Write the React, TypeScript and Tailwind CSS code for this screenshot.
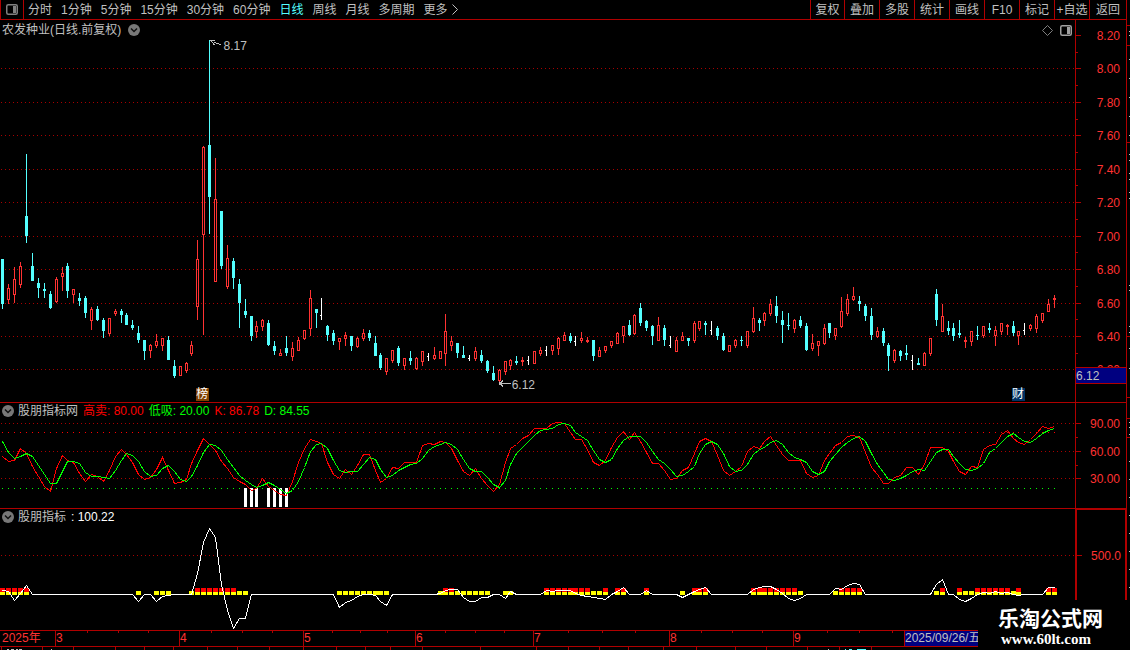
import type { ReactNode } from "react";

type Kind = "u" | "d" | "w";
type Candle = [Kind, number, number, number, number];

// kind, high, body top, body bottom, low (y inside the price panel, offset by PRICE_TOP)
const CANDLES: Candle[] = [
  ["d", 259, 259, 304, 309], ["u", 284, 288, 300, 304], ["u", 267, 279, 295, 303], ["u", 262, 266, 285, 288],
  ["d", 154, 216, 236, 243], ["d", 253, 266, 281, 281], ["d", 278, 283, 288, 298], ["d", 283, 289, 291, 298],
  ["d", 291, 294, 308, 309], ["u", 277, 279, 302, 303], ["u", 267, 273, 277, 291], ["d", 263, 266, 291, 298],
  ["u", 289, 289, 295, 303], ["d", 293, 298, 301, 306], ["d", 296, 298, 313, 318], ["u", 307, 309, 321, 330],
  ["d", 306, 309, 320, 321], ["d", 318, 320, 331, 338], ["u", 318, 318, 334, 336], ["u", 309, 311, 314, 316],
  ["d", 309, 311, 315, 323], ["d", 313, 315, 325, 325], ["d", 320, 325, 328, 330], ["d", 326, 333, 340, 343],
  ["d", 340, 340, 351, 360], ["u", 344, 345, 351, 358], ["u", 334, 341, 346, 348], ["u", 338, 338, 346, 351],
  ["d", 336, 340, 360, 360], ["d", 360, 366, 376, 378], ["u", 366, 366, 376, 376], ["u", 362, 363, 371, 373],
  ["u", 341, 345, 354, 356], ["u", 240, 259, 307, 320], ["u", 146, 147, 235, 335], ["d", 40, 145, 197, 234],
  ["u", 158, 199, 282, 282], ["d", 211, 211, 266, 269], ["u", 245, 258, 287, 289], ["d", 258, 261, 278, 289],
  ["d", 279, 284, 303, 328], ["d", 299, 311, 315, 318], ["d", 316, 316, 336, 341], ["u", 321, 326, 332, 338],
  ["u", 319, 320, 327, 331], ["d", 320, 323, 345, 346], ["d", 341, 346, 351, 355], ["u", 349, 353, 356, 356],
  ["d", 336, 348, 353, 356], ["u", 342, 348, 357, 361], ["u", 337, 340, 351, 351], ["u", 330, 330, 339, 340],
  ["u", 290, 298, 329, 336], ["d", 309, 309, 313, 328], ["w", 298, 315, 316, 320], ["d", 325, 326, 335, 341],
  ["d", 330, 333, 341, 345], ["u", 338, 338, 342, 350], ["u", 332, 335, 339, 346], ["d", 336, 336, 346, 351],
  ["u", 337, 338, 347, 348], ["u", 329, 333, 339, 341], ["d", 330, 333, 338, 341], ["d", 336, 343, 356, 356],
  ["d", 353, 355, 368, 370], ["u", 358, 358, 372, 375], ["u", 350, 350, 361, 363], ["d", 346, 348, 363, 366],
  ["u", 358, 358, 366, 370], ["d", 351, 358, 361, 365], ["u", 357, 358, 369, 370], ["u", 351, 351, 362, 366],
  ["w", 353, 356, 357, 361], ["u", 347, 355, 359, 360], ["u", 351, 351, 359, 359], ["u", 314, 331, 354, 366],
  ["u", 336, 341, 346, 351], ["d", 343, 343, 353, 358], ["d", 346, 355, 358, 358], ["w", 355, 358, 359, 361],
  ["u", 347, 351, 359, 361], ["d", 350, 355, 361, 363], ["d", 360, 361, 371, 373], ["d", 366, 373, 380, 381],
  ["u", 369, 370, 381, 382], ["u", 361, 361, 372, 375], ["u", 359, 360, 366, 370], ["d", 356, 361, 363, 365],
  ["u", 357, 360, 362, 366], ["w", 356, 360, 361, 365], ["u", 351, 351, 364, 364], ["u", 347, 350, 354, 356],
  ["w", 346, 350, 351, 356], ["u", 345, 345, 351, 355], ["u", 337, 338, 349, 355], ["u", 332, 335, 341, 341],
  ["d", 333, 336, 341, 343], ["w", 336, 341, 342, 346], ["u", 332, 338, 341, 343], ["u", 337, 340, 342, 343],
  ["d", 340, 340, 356, 361], ["u", 347, 350, 357, 357], ["u", 346, 346, 351, 353], ["u", 341, 341, 346, 348],
  ["u", 332, 333, 344, 344], ["u", 326, 326, 336, 343], ["d", 320, 325, 335, 336], ["u", 314, 315, 334, 335],
  ["d", 303, 308, 323, 326], ["d", 320, 321, 328, 331], ["d", 325, 326, 336, 345], ["u", 317, 325, 341, 341],
  ["d", 325, 328, 340, 346], ["w", 336, 345, 346, 348], ["u", 337, 340, 352, 352], ["u", 332, 336, 341, 341],
  ["d", 338, 338, 341, 346], ["u", 321, 323, 341, 343], ["u", 321, 321, 329, 331], ["d", 321, 323, 325, 335],
  ["w", 321, 330, 331, 335], ["d", 326, 328, 336, 340], ["d", 333, 336, 350, 351], ["u", 345, 345, 352, 352],
  ["u", 339, 340, 346, 348], ["d", 336, 340, 341, 346], ["u", 331, 331, 346, 348], ["u", 307, 318, 332, 333],
  ["d", 318, 320, 323, 331], ["u", 312, 313, 321, 326], ["u", 299, 304, 314, 316], ["d", 296, 306, 316, 323],
  ["d", 311, 320, 325, 343], ["d", 313, 325, 326, 330], ["u", 319, 320, 329, 333], ["d", 316, 320, 326, 328],
  ["d", 323, 326, 350, 351], ["u", 334, 343, 349, 351], ["u", 341, 341, 346, 356], ["u", 324, 328, 344, 345],
  ["d", 323, 323, 333, 338], ["u", 328, 328, 336, 340], ["u", 297, 311, 327, 328], ["u", 294, 299, 314, 316],
  ["u", 287, 296, 300, 301], ["d", 296, 301, 304, 311], ["d", 304, 306, 316, 321], ["d", 308, 316, 335, 340],
  ["u", 327, 331, 337, 338], ["d", 328, 331, 343, 346], ["d", 343, 345, 356, 371], ["u", 349, 350, 361, 363],
  ["d", 350, 351, 356, 361], ["d", 345, 353, 355, 360], ["w", 355, 360, 361, 370], ["d", 358, 363, 365, 365],
  ["u", 352, 353, 366, 366], ["u", 338, 338, 354, 356], ["d", 289, 294, 320, 326], ["u", 304, 316, 332, 332],
  ["d", 321, 328, 331, 335], ["d", 323, 328, 336, 341], ["d", 320, 333, 335, 338], ["u", 337, 340, 342, 348],
  ["u", 331, 331, 342, 346], ["d", 326, 335, 336, 340], ["u", 326, 326, 336, 338], ["d", 323, 328, 330, 333],
  ["u", 326, 330, 336, 346], ["u", 323, 323, 332, 335], ["u", 324, 325, 327, 335], ["d", 321, 326, 333, 336],
  ["u", 331, 331, 336, 345], ["w", 323, 330, 331, 335], ["u", 324, 325, 329, 331], ["u", 314, 316, 329, 333],
  ["u", 313, 313, 321, 323], ["u", 299, 304, 312, 312], ["u", 295, 298, 300, 308],
];

// Line values are kept in thirds of a unit
const K_LINE = [
  168, 183, 181, 145, 159, 198, 230, 258, 273, 205, 167, 181, 186, 221, 243, 224, 230, 243, 210, 170,
  149, 163, 186, 223, 238, 233, 207, 173, 212, 249, 246, 238, 190, 152, 115, 132, 151, 184, 204, 233,
  243, 252, 270, 264, 235, 258, 270, 283, 286, 244, 187, 144, 118, 123, 130, 187, 222, 235, 209, 222,
  196, 163, 163, 212, 246, 235, 202, 205, 187, 187, 187, 136, 130, 132, 124, 127, 145, 181, 213, 226,
  205, 235, 256, 274, 254, 188, 145, 133, 115, 105, 85, 85, 85, 70, 66, 69, 97, 118, 118, 147,
  186, 195, 182, 142, 112, 95, 117, 98, 124, 157, 190, 190, 210, 238, 235, 212, 202, 160, 123, 114,
  123, 166, 212, 225, 215, 200, 153, 140, 146, 123, 110, 135, 163, 180, 180, 180, 220, 233, 225, 180,
  160, 135, 127, 109, 106, 112, 156, 203, 224, 250, 250, 231, 225, 202, 202, 223, 193, 143, 142, 142,
  155, 185, 213, 222, 198, 203, 148, 135, 132, 102, 90, 114, 127, 133, 118, 100, 79, 85, 79,
];

const D_LINE = [
  123, 157, 175, 170, 159, 168, 196, 222, 250, 250, 215, 184, 184, 190, 216, 230, 230, 233, 234, 212,
  181, 160, 167, 184, 213, 229, 226, 206, 195, 215, 238, 244, 229, 196, 158, 133, 136, 152, 177, 202,
  226, 240, 253, 262, 255, 247, 255, 268, 279, 272, 243, 201, 155, 132, 130, 146, 180, 210, 217, 214,
  213, 192, 173, 178, 208, 232, 226, 211, 202, 193, 189, 176, 150, 138, 132, 127, 132, 149, 178, 205,
  213, 214, 233, 252, 262, 241, 192, 160, 141, 123, 107, 92, 88, 85, 73, 70, 77, 97, 110, 121,
  150, 177, 187, 177, 146, 121, 110, 109, 109, 127, 155, 178, 189, 209, 230, 225, 215, 198, 160, 132,
  124, 132, 160, 198, 213, 210, 192, 163, 147, 142, 127, 121, 132, 157, 172, 178, 186, 213, 222, 213,
  185, 163, 142, 127, 114, 109, 123, 160, 194, 217, 238, 241, 234, 226, 214, 208, 210, 183, 157, 149,
  149, 169, 189, 207, 211, 206, 190, 157, 144, 128, 108, 101, 111, 124, 127, 115, 101, 90, 85,
];

// Every day that is not listed sits on the zero line
const ZERO = 583;
const FLOW: Record<number, number> = {
  0: 570, 1: 573, 2: 601, 3: 581, 4: 556, 23: 605, 26: 605, 27: 588, 28: 586, 33: 520, 34: 428, 35: 385,
  36: 412, 37: 553, 38: 630, 39: 685, 40: 656, 41: 656, 57: 622, 58: 607, 59: 600, 60: 588, 63: 585,
  64: 603, 65: 616, 74: 580, 75: 571, 76: 567, 77: 569, 78: 592, 79: 604, 80: 604, 81: 593, 82: 592,
  85: 595, 86: 573, 92: 571, 93: 574, 94: 571, 95: 571, 96: 571, 97: 579, 98: 586, 99: 588, 100: 592,
  101: 595, 102: 598, 104: 573, 105: 563, 109: 571, 115: 591, 117: 574, 118: 568, 119: 563, 127: 567,
  128: 562, 129: 559, 130: 560, 131: 568, 132: 580, 133: 596, 134: 601, 135: 595, 141: 566, 142: 568,
  143: 556, 144: 549, 145: 553, 158: 553, 159: 538, 162: 598, 163: 604, 164: 594, 166: 577, 167: 580,
  168: 574, 169: 580, 170: 577, 172: 586, 177: 563, 178: 562,
};

const YELLOW = [
  [0, 4], [23, 23], [26, 28], [32, 41], [57, 65], [74, 82], [85, 86], [92, 102], [104, 105], [109, 109],
  [115, 115], [117, 119], [127, 135], [141, 145], [158, 159], [162, 172], [177, 178],
];
const RED = [
  [0, 4], [33, 39], [75, 76], [92, 99], [102, 102], [104, 105], [109, 109], [117, 119], [127, 134],
  [142, 145], [159, 159], [162, 162], [165, 170], [172, 172], [177, 178],
];
const LOW_BARS = [41, 42, 43, 45, 46, 47, 48];

const PRICE_TOP = 20;
const KD_TOP = 403;
const FLOW_TOP = 509;
const CHART_W = 1075;

const xOf = (i: number) => Math.floor(2.93 + 5.907 * i);
const days = CANDLES.map((_, i) => i);
const expand = (ranges: number[][]) => days.filter((i) => ranges.some(([a, b]) => i >= a && i <= b));
const toPoints = (values: number[], top: number) =>
  values.map((v, i) => `${xOf(i) + 0.5},${Math.floor(400 + v / 3 - top) + 0.5}`).join(" ");

const PERIODS = ["分时", "1分钟", "5分钟", "15分钟", "30分钟", "60分钟", "日线", "周线", "月线", "多周期"];
const ACTIONS = ["叠加", "多股", "统计", "画线", "F10", "标记", "+自选"];
const PRICES = ["8.20", "8.00", "7.80", "7.60", "7.40", "7.20", "7.00", "6.80", "6.60", "6.40", "6.20"];
const MONTHS = [
  { label: "3", span: 124 },
  { label: "4", span: 124 },
  { label: "5", span: 112 },
  { label: "6", span: 118 },
  { label: "7", span: 136 },
  { label: "8", span: 124 },
  { label: "9", span: 131 },
];

function SidePanelIcon({ className }: { className: string }) {
  return (
    <svg viewBox="0 0 12 11" width="12" height="11" className={className}>
      <rect x="0.75" y="0.75" width="10.5" height="9.5" rx="1.5" fill="none" stroke="currentColor" strokeWidth="1.5" />
      <rect x="7" y="2" width="3" height="7" fill="currentColor" />
    </svg>
  );
}

function FoldButton({ label }: { label: string }) {
  return (
    <button type="button" aria-label={label} className="size-3 shrink-0">
      <svg viewBox="0 0 12 12" width="12" height="12">
        <circle cx="6" cy="6" r="6" fill="#787878" />
        <path d="M3 4.5 6 7.5 9 4.5" fill="none" stroke="#101010" strokeWidth="1.5" />
      </svg>
    </button>
  );
}

function GridLine({ y }: { y: number }) {
  return <line x1="1" x2={CHART_W} y1={y + 0.5} y2={y + 0.5} stroke="#a80000" strokeDasharray="1 3" />;
}

function Chart({ height, children }: { height: number; children: ReactNode }) {
  return (
    <svg
      viewBox={`0 0 ${CHART_W} ${height}`}
      height={height}
      preserveAspectRatio="none"
      shapeRendering="crispEdges"
      className="block w-full"
    >
      {children}
    </svg>
  );
}

function Axis({ height, labels, minor }: { height: number; labels: [string, number][]; minor: number[] }) {
  return (
    <svg width="50" height={height} className="block" fill="#ff3232" fontSize="12">
      {labels.map(([text, y]) => (
        <g key={text}>
          <rect x="0" y={y} width="5" height="1" fill="#b00000" />
          <text x="44" y={y + 5} textAnchor="end">
            {text}
          </text>
        </g>
      ))}
      {minor.map((y) => (
        <rect key={y} x="0" y={y} width="2" height="1" fill="#b00000" />
      ))}
    </svg>
  );
}

function CandleShape({ candle, x }: { candle: Candle; x: number }) {
  const [kind, high, top, bottom, low] = candle;
  const y = (v: number) => v - PRICE_TOP;
  if (kind === "w") {
    return (
      <g fill="#ffffff">
        <rect x={x} y={y(high)} width="1" height={low - high} />
        <rect x={x - 1} y={y(top)} width="1" height="1" />
      </g>
    );
  }
  if (kind === "d") {
    return (
      <g fill="#54ffff">
        <rect x={x} y={y(high)} width="1" height={low - high} />
        <rect x={x - 1} y={y(top)} width="3" height={bottom - top} />
      </g>
    );
  }
  return (
    <g fill="#ff3232">
      <rect x={x} y={y(high)} width="1" height={top - high} />
      <rect x={x} y={y(bottom)} width="1" height={low - bottom} />
      <rect x={x - 0.5} y={y(top) + 0.5} width="2" height={bottom - top - 1} fill="none" stroke="#ff3232" />
    </g>
  );
}

function Toolbar() {
  return (
    <header className="flex h-5 items-stretch border-b border-[#b00000]">
      <button
        type="button"
        aria-label="侧栏"
        className="flex w-6 items-center justify-center border-x border-[#b00000] text-[#808080]"
      >
        <SidePanelIcon className="mb-px" />
      </button>
      <nav className="flex items-center gap-[9px] pl-1">
        {PERIODS.map((p) => (
          <button type="button" key={p} className={p === "日线" ? "text-[#54ffff]" : ""}>
            {p}
          </button>
        ))}
        <button type="button" className="flex items-center gap-1">
          更多
          <svg viewBox="0 0 6 11" width="6" height="11" fill="none" stroke="currentColor">
            <path d="M0.5 0.5 5.5 5.5 0.5 10.5" />
          </svg>
        </button>
      </nav>
      <div className="ml-auto flex items-stretch border-r border-[#b00000]">
        <button type="button" className="w-[34px] border-l border-[#b00000]">
          复权
        </button>
        {ACTIONS.map((a) => (
          <button type="button" key={a} className="w-[35px] border-l border-[#b00000] whitespace-nowrap">
            {a}
          </button>
        ))}
        <button type="button" className="w-[37px] border-l border-[#b00000]">
          返回
        </button>
      </div>
    </header>
  );
}

function PricePanel() {
  const gridY = (i: number) => Math.floor(15.4 + 33.45 * i);
  return (
    <section className="flex border-b border-[#b00000]">
      <div className="relative min-w-0 flex-1">
        <Chart height={382}>
          {PRICES.slice(1).map((p, i) => (
            <GridLine key={p} y={gridY(i + 1)} />
          ))}
          {CANDLES.map((c, i) => (
            <CandleShape key={i} candle={c} x={xOf(i)} />
          ))}
          <g fill="none" stroke="#c0c0c0">
            <path d="M210 20.5h5M210.5 20l4 5M214 22.5l7 2" />
            <path d="M499 363.5h12M503 360.5l-3 3 3 3" />
            <path d="M499 363h3" strokeWidth="3" />
          </g>
        </Chart>
        <div className="absolute inset-x-0 top-0 flex h-5 items-center pr-[3px] pl-0.5">
          <h1>农发种业(日线.前复权)</h1>
          <div className="ml-[7px] flex">
            <FoldButton label="主图菜单" />
          </div>
          <div className="ml-auto flex items-center gap-[7px] text-[#808080]">
            <svg viewBox="0 0 11 11" width="11" height="11" fill="none" stroke="currentColor">
              <path d="M5.5 0.5 10.5 5.5 5.5 10.5 0.5 5.5Z" />
            </svg>
            <SidePanelIcon className="text-[#a0a0a0]" />
          </div>
        </div>
        <span className="absolute top-[18px] left-[20.8%]">8.17</span>
        <span className="absolute top-[357px] left-[47.6%]">6.12</span>
        <span className="absolute top-[368px] left-[18.2%] size-[13px] bg-[#804000] text-center leading-3 text-white">
          榜
        </span>
        <span className="absolute top-[368px] left-[94.1%] size-[13px] bg-[#003264] text-center leading-3 text-white">
          财
        </span>
      </div>
      <div className="relative border-x border-[#b00000]">
        <Axis
          height={382}
          labels={PRICES.map((p, i) => [p, gridY(i)])}
          minor={PRICES.slice(1).map((_, i) => gridY(i + 0.5))}
        />
        <div className="absolute inset-x-0 top-[347px] flex h-[17px] items-center border-y border-[#b00000] bg-[#000080] text-[#c0c0c0]">
          6.12
        </div>
      </div>
    </section>
  );
}

function KdPanel() {
  return (
    <section className="flex border-b border-[#b00000]">
      <div className="relative min-w-0 flex-1">
        <Chart height={105}>
          {[20, 48, 75].map((y) => (
            <GridLine key={y} y={y} />
          ))}
          {days.map((i) => (
            <g key={i}>
              <rect x={xOf(i)} y="29" width="1" height="1" fill="#ff0000" />
              <rect x={xOf(i)} y="85" width="1" height="1" fill="#00ff00" />
            </g>
          ))}
          {LOW_BARS.map((i) => (
            <rect key={i} x={xOf(i) - 1} y="85" width="3" height="19" fill="#ffffff" />
          ))}
          <polyline points={toPoints(K_LINE, KD_TOP)} fill="none" stroke="#ff0000" />
          <polyline points={toPoints(D_LINE, KD_TOP)} fill="none" stroke="#00ff00" />
        </Chart>
        <div className="absolute inset-x-0 top-0 flex h-4 items-center gap-1 pl-0.5 whitespace-nowrap">
          <FoldButton label="副图一菜单" />
          <div className="flex gap-[5px]">
            <h2>股朋指标网</h2>
            <span className="text-[#ff0000]">高卖: 80.00</span>
            <span className="text-[#00ff00]">低吸: 20.00</span>
            <span className="text-[#ff0000]">K: 86.78</span>
            <span className="text-[#00ff00]">D: 84.55</span>
          </div>
        </div>
      </div>
      <div className="border-x border-[#b00000]">
        <Axis height={105} labels={[["90.00", 20], ["60.00", 48], ["30.00", 75]]} minor={[34, 62]} />
      </div>
    </section>
  );
}

function FlowPanel() {
  const values = days.map((i) => FLOW[i] ?? ZERO);
  return (
    <section className="flex border-b border-[#b00000]">
      <div className="relative min-w-0 flex-1">
        <Chart height={121}>
          <GridLine y={46} />
          {expand(YELLOW).map((i) => (
            <rect key={i} x={xOf(i) - 2} y="82" width="5" height="4" fill="#ffff00" />
          ))}
          {expand(RED).map((i) => (
            <rect key={i} x={xOf(i) - 2} y="79" width="5" height="4" fill="#ff0000" />
          ))}
          <polyline points={toPoints(values, FLOW_TOP)} fill="none" stroke="#ffffff" />
        </Chart>
        <div className="absolute inset-x-0 top-0 flex h-4 items-center gap-1 pl-0.5 whitespace-nowrap">
          <FoldButton label="副图二菜单" />
          <div className="flex gap-[5px]">
            <h2>股朋指标</h2>
            <span className="text-white">: 100.22</span>
          </div>
        </div>
      </div>
      <div className="w-[52px] border-x-2 border-t border-[#b00000]">
        <Axis height={120} labels={[["500.0", 45]]} minor={[]} />
      </div>
    </section>
  );
}

function TimeAxis() {
  return (
    <section className="relative flex h-4 border-b border-[#b00000] leading-[15px] text-[#ff3232]">
      <div className="min-w-0 basis-0" style={{ flexGrow: 55 }}>
        <p className="pl-0.5 whitespace-nowrap">2025年</p>
      </div>
      {MONTHS.map((m) => (
        <div key={m.label} className="flex min-w-0 basis-0" style={{ flexGrow: m.span }}>
          <div className="grid flex-1 grid-cols-4 border-l border-[#b00000]">
            <span>{m.label}</span>
            <i className="h-0.5 border-l border-[#b00000]" />
            <i className="h-0.5 border-l border-[#b00000]" />
            <i className="h-0.5 border-l border-[#b00000]" />
          </div>
        </div>
      ))}
      <div className="min-w-0 basis-0" style={{ flexGrow: 203 }} />
      <time className="absolute inset-y-0 right-[147px] w-[76px] border-l border-[#b00000] bg-[#000080] whitespace-nowrap text-[#c0c0c0]">
        2025/09/26/五
      </time>
    </section>
  );
}

// The top edge of the ticker row that continues below the window
function TickerEdge() {
  const marks = [
    1, 42, 73, 115, 144, 173, 207, 237, 269, 303, 336, 365, 390, 422, 480, 536, 568, 599, 628, 663, 696, 735, 766,
    807, 839, 871,
  ];
  return (
    <svg height="3" className="block w-full" shapeRendering="crispEdges">
      {marks.map((x) => (
        <rect key={x} x={x} y="0" width="1" height="3" fill="#b00000" />
      ))}
      <path d="M7 2.5h2M11 2.5h3M16 2.5h2M19 2.5h3M51 2.5h1M828 2.5h1" stroke="#c0c0c0" />
      <path d="M845 2.5h1M849 2.5h3M857 2.5h9" stroke="#54ffff" />
    </svg>
  );
}

function QuoteEdge() {
  const dots = [
    31, 35, 59, 78, 97, 116, 135, 154, 160, 173, 179, 192, 198, 285, 290, 326, 332, 348, 368, 422, 427, 434, 461,
    479, 497, 515, 533, 551, 569, 587,
  ];
  return (
    <svg width="3" height="600" shapeRendering="crispEdges" className="shrink-0">
      {dots.map((y) => (
        <rect key={y} x="2" y={y} width="1" height="1" fill="#c0c0c0" />
      ))}
      {[25, 45, 142, 336, 397, 418, 437].map((y) => (
        <rect key={y} x="0" y={y} width="3" height="1" fill="#b00000" />
      ))}
    </svg>
  );
}

export default function App() {
  return (
    <div className="relative flex overflow-hidden bg-black font-['Liberation_Sans','Noto_Sans_CJK_SC',sans-serif] text-[12px] leading-4 text-[#c0c0c0]">
      <main className="min-w-0 flex-1">
        <Toolbar />
        <PricePanel />
        <KdPanel />
        <FlowPanel />
        <TimeAxis />
        <TickerEdge />
      </main>
      <QuoteEdge />
      <div className="absolute right-0 bottom-0 h-[50px] w-[152px] bg-black pt-2 pl-5 text-white">
        <p className="text-[21px] leading-[22px] font-bold">乐淘公式网</p>
        <p className="pl-[3px] font-['Liberation_Serif',serif] text-[15px] leading-[18px] font-bold">www.60lt.com</p>
      </div>
    </div>
  );
}
